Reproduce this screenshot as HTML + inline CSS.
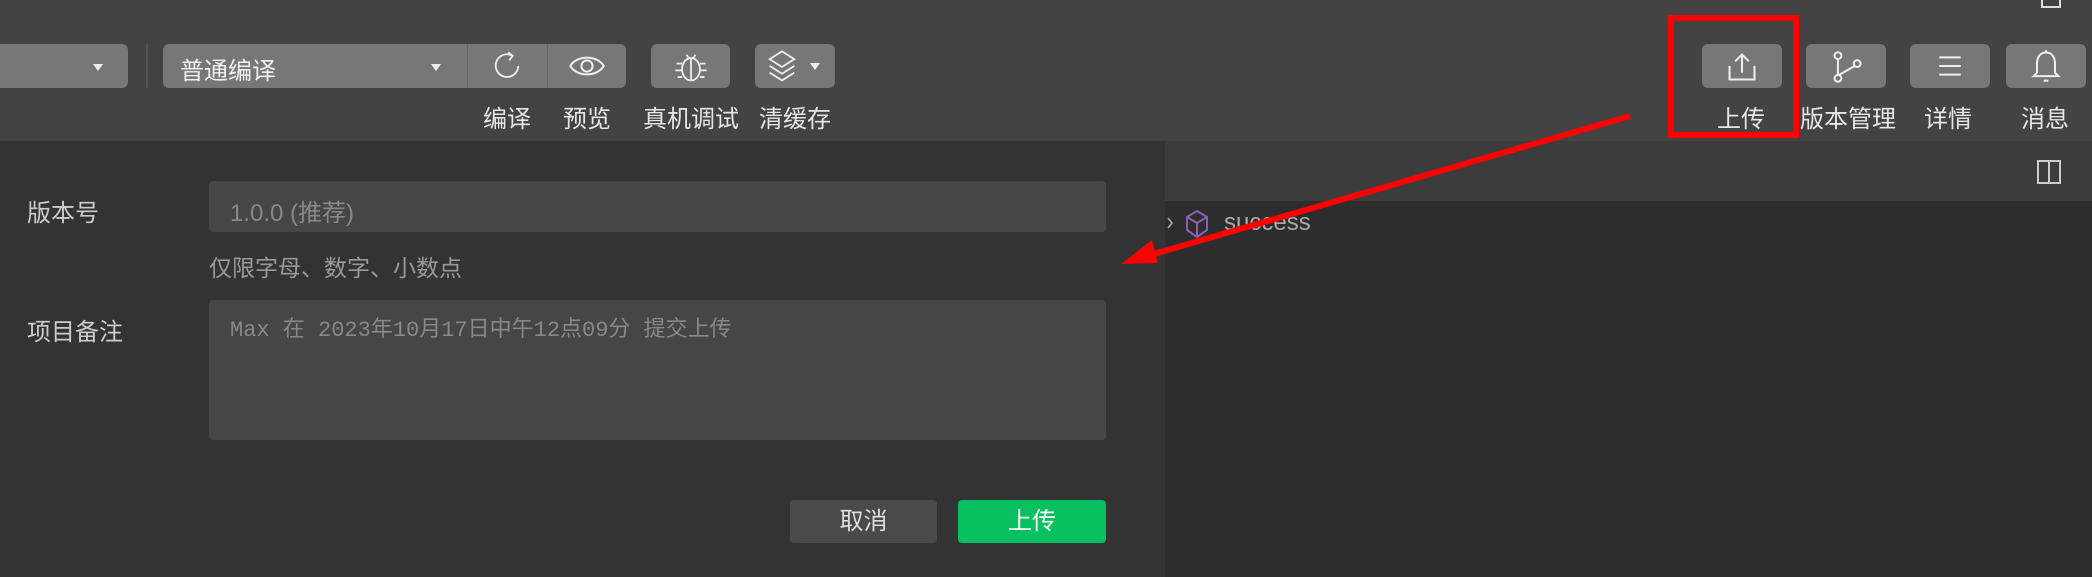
<!DOCTYPE html>
<html><head><meta charset="utf-8"><style>
*{margin:0;padding:0;box-sizing:border-box}
body{width:2092px;height:577px;overflow:hidden;background:#2d2d2d;font-family:"Liberation Sans","Noto Sans CJK SC",sans-serif;position:relative}
.a{position:absolute}
.btn{position:absolute;top:44px;height:44px;background:#777;border-radius:6px}
.lbl{position:absolute;top:99px;font-size:24px;color:#e6e6e6;transform:translateX(-50%);white-space:nowrap}
.tri{position:absolute;width:0;height:0;border-left:5px solid transparent;border-right:5px solid transparent;border-top:7px solid #eee}
svg{position:absolute}
</style></head><body>
<div class="a" style="left:0;top:0;width:2092px;height:141px;background:#434343"></div>
<div class="a" style="left:0;top:141px;width:1165px;height:436px;background:#333"></div>
<div class="a" style="left:1165px;top:141px;width:927px;height:60px;background:#3c3c3c"></div>
<div class="a" style="left:2041px;top:0;width:20px;height:8px;border:2px solid #ddd;border-top:none"></div>

<div class="btn" style="left:-10px;width:138px"></div><div class="tri" style="left:93px;top:64px"></div>
<div class="a" style="left:146px;top:44px;width:2px;height:44px;background:#555"></div>
<div class="btn" style="left:163px;width:463px"></div>
<div class="a" style="left:467px;top:44px;width:1px;height:44px;background:#666"></div>
<div class="a" style="left:547px;top:44px;width:1px;height:44px;background:#666"></div>
<div class="a" style="left:180px;top:51px;font-size:24px;color:#f0f0f0">普通编译</div>
<div class="tri" style="left:431px;top:64px"></div>
<svg style="left:490px;top:49px" width="34" height="34" viewBox="0 0 30 30" fill="none" stroke="#eee" stroke-width="1.6"><path d="M20 6A10 10 0 1 0 25 15"/><path d="M16 3l4 3-3 4"/></svg>
<svg style="left:568px;top:50px" width="38" height="32" viewBox="0 0 34 28" fill="none" stroke="#eee" stroke-width="1.8"><path d="M2 14C8 4 26 4 32 14C26 24 8 24 2 14Z"/><circle cx="17" cy="14" r="5"/></svg>
<div class="btn" style="left:651px;width:79px"></div>
<svg style="left:672px;top:48px" width="38" height="38" viewBox="0 0 34 34" fill="none" stroke="#eee" stroke-width="1.6"><ellipse cx="17" cy="19" rx="8" ry="10"/><path d="M17 9v20M13 6l2 3M21 6l-2 3M9 14H4M9 20H3M9 26H5M25 14h5M25 20h6M25 26h4"/></svg>
<div class="btn" style="left:755px;width:80px"></div>
<svg style="left:766px;top:48px" width="32" height="38" viewBox="0 0 28 34" fill="none" stroke="#eee" stroke-width="1.6"><path d="M14 3L25 10L14 17L3 10Z"/><path d="M3 16l11 7 11-7M3 22l11 7 11-7"/></svg>
<div class="tri" style="left:810px;top:63px"></div>
<div class="lbl" style="left:507px">编译</div>
<div class="lbl" style="left:587px">预览</div>
<div class="lbl" style="left:691px">真机调试</div>
<div class="lbl" style="left:795px">清缓存</div>

<div class="btn" style="left:1702px;width:80px"></div>
<svg style="left:1725px;top:50px" width="34" height="34" viewBox="0 0 30 30" fill="none" stroke="#eee" stroke-width="1.8"><path d="M4 14v12h22V14M15 20V4M9 10l6-6 6 6"/></svg>
<div class="btn" style="left:1806px;width:80px"></div>
<svg style="left:1830px;top:50px" width="34" height="34" viewBox="0 0 30 30" fill="none" stroke="#eee" stroke-width="1.8"><circle cx="7" cy="5" r="3"/><circle cx="7" cy="25" r="3"/><circle cx="24" cy="12" r="3"/><path d="M7 8v14M8 22L22 14"/></svg>
<div class="btn" style="left:1910px;width:80px"></div>
<svg style="left:1933px;top:52px" width="34" height="28" viewBox="0 0 30 26" fill="none" stroke="#eee" stroke-width="1.8"><path d="M5 5h20M5 13h20M5 21h20"/></svg>
<div class="btn" style="left:2006px;width:80px"></div>
<svg style="left:2029px;top:48px" width="34" height="36" viewBox="0 0 30 32" fill="none" stroke="#eee" stroke-width="1.8"><path d="M15 4C9 4 7 9 7 14v8l-3 3h22l-3-3v-8C23 9 21 4 15 4Z"/><path d="M13 29h4"/><path d="M15 2v2"/></svg>
<div class="lbl" style="left:1741px">上传</div>
<div class="lbl" style="left:1848px">版本管理</div>
<div class="lbl" style="left:1948px">详情</div>
<div class="lbl" style="left:2045px">消息</div>
<div class="a" style="left:1668px;top:15px;width:131px;height:123px;border:6px solid #f00"></div>

<div class="a" style="left:2037px;top:160px;width:24px;height:24px;border:2px solid #ccc"></div>
<div class="a" style="left:2048px;top:160px;width:2px;height:24px;background:#ccc"></div>

<div class="a" style="left:27px;top:193px;font-size:24px;color:#ccc">版本号</div>
<div class="a" style="left:209px;top:181px;width:897px;height:51px;background:#464646;border-radius:4px"></div>
<div class="a" style="left:230px;top:193px;font-size:24px;color:#888">1.0.0 (推荐)</div>
<div class="a" style="left:209px;top:249px;font-size:23px;color:#999">仅限字母、数字、小数点</div>
<div class="a" style="left:27px;top:312px;font-size:24px;color:#ccc">项目备注</div>
<div class="a" style="left:209px;top:300px;width:897px;height:140px;background:#464646;border-radius:4px"></div>
<div class="a" style="left:230px;top:311px;font-size:22px;color:#888;font-family:'Liberation Mono','Noto Sans CJK SC',monospace">Max 在 2023年10月17日中午12点09分 提交上传</div>
<div class="a" style="left:790px;top:500px;width:147px;height:43px;background:#4a4a4a;border-radius:4px;color:#ddd;font-size:24px;text-align:center;line-height:43px">取消</div>
<div class="a" style="left:958px;top:500px;width:148px;height:43px;background:#07c160;border-radius:4px;color:#fff;font-size:24px;text-align:center;line-height:43px">上传</div>

<svg style="left:1164px;top:210px" width="30" height="30" viewBox="0 0 30 30" fill="none" stroke="#aaa" stroke-width="1.6"><path d="M4 8l4 5-4 5"/></svg>
<svg style="left:1184px;top:208px" width="26" height="32" viewBox="0 0 26 32" fill="none" stroke="#8a5fb0" stroke-width="2"><path d="M13 3L23 9V22L13 29L3 22V9Z"/><path d="M3 9L13 15L23 9M13 15V29"/></svg>
<div class="a" style="left:1224px;top:209px;font-size:24px;color:#aaa">success</div>

<svg class="a" style="left:0;top:0" width="2092" height="577"><path d="M1630 116L1140 258" stroke="#f00" stroke-width="6"/><path d="M1121 264L1152 240L1158 263Z" fill="#f00"/></svg>
</body></html>
